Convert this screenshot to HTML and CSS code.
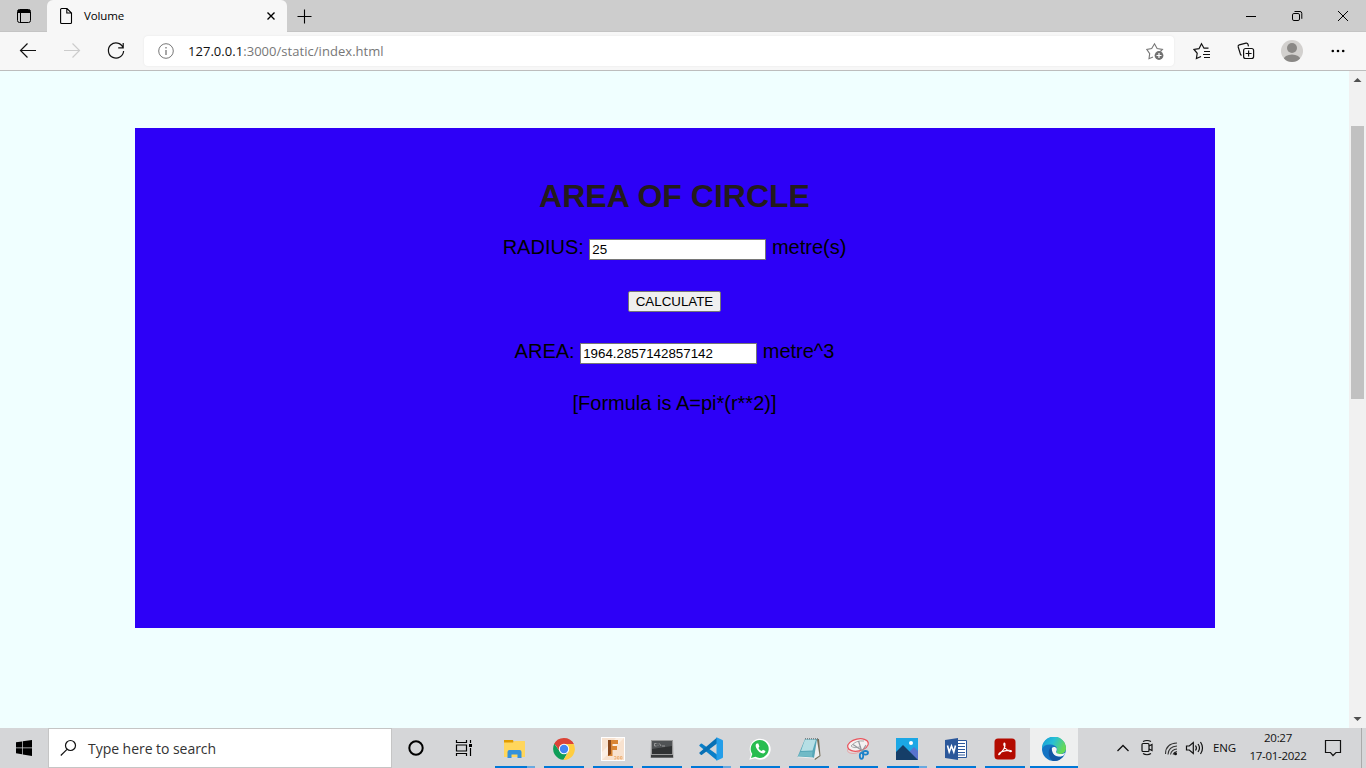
FILE: index.html
```html
<!DOCTYPE html>
<html lang="en">
<head>
<meta charset="utf-8">
<title>Volume</title>
<link rel="stylesheet" href="styles.css">
</head>
<body>
<header class="tabbar">
  <div class="tab-menu"><svg width="16" height="16" viewBox="0 0 16 16"><rect x="1.500" y="1.500" width="13" height="13" rx="2" fill="none" stroke="#000"/><path d="M2 2h12v3H2z"/><path d="M4.500 5v9" stroke="#000"/></svg></div>
  <div class="tab">
    <svg width="14" height="18" viewBox="0 0 14 18" fill="none" stroke="#000" stroke-width="1.1"><path d="M2.600 1.500H8l4.500 4.500v9.500a1 1 0 0 1-1 1H2.600a1 1 0 0 1-1-1v-13a1 1 0 0 1 1-1zM7.800 1.500V6h4.700"/></svg>
    <span class="tab-title">Volume</span>
    <svg class="tab-close" width="10" height="10" viewBox="0 0 10 10" stroke="#000" stroke-width="1.400"><path d="M1.500 1.500l7 7M8.500 1.500l-7 7"/></svg>
  </div>
  <div class="new-tab"><svg width="15" height="15" viewBox="0 0 15 15" stroke="#000" stroke-width="1.1"><path d="M7.500.5v14M.5 7.500h14"/></svg></div>
  <div class="window-controls">
    <svg width="46" height="32" viewBox="0 0 46 32" stroke="#000"><path d="M18 16.500h10"/></svg>
    <svg width="46" height="32" viewBox="0 0 46 32" fill="none" stroke="#000"><rect x="18.500" y="13.500" width="7" height="7" rx="1.400"/><path d="M20.500 11.500H26a1.800 1.800 0 0 1 1.800 1.800v5.500"/></svg>
    <svg width="46" height="32" viewBox="0 0 46 32" stroke="#000"><path d="M18 11l10 10M28 11L18 21"/></svg>
  </div>
</header>
<nav class="toolbar">
  <svg width="44" height="38" viewBox="0 0 44 38" fill="none" stroke="#111" stroke-width="1.200"><path d="M36 18.500H20.500M27.500 11.500l-7 7 7 7"/></svg>
  <svg width="44" height="38" viewBox="0 0 44 38" fill="none" stroke="#ccc" stroke-width="1.200"><path d="M20 18.500h15.500M28.500 11.500l7 7-7 7"/></svg>
  <svg width="44" height="38" viewBox="0 0 44 38" fill="none" stroke="#111" stroke-width="1.200"><path d="M35 15.500a7.600 7.600 0 1 0 .6 3.500M35.200 11v4.800h-5"/></svg>
  <div class="address">
    <svg width="16" height="16" viewBox="0 0 16 16"><circle cx="8" cy="8" r="7.300" fill="none" stroke="#777"/><path d="M8 7v5M8 4v1.400" stroke="#777" stroke-width="1.300"/></svg>
    <span class="url"><b>127.0.0.1</b>:3000/static/index.html</span>
    <svg class="add-favorite" width="18" height="18" viewBox="0 0 18 18"><path d="M7 15l-4 1.700 .7-5.100L.8 7.400l4.900-.8L8.500 1.800l2.600 4.800 5.300.8-2 2.100" fill="none" stroke="#777" stroke-width="1.100"/><circle cx="13" cy="13.500" r="4.400" fill="#717171"/><path d="M13 11v5M10.500 13.500h5" stroke="#fff" stroke-width="1.200"/></svg>
  </div>
  <div class="tools">
    <svg width="18" height="18" viewBox="0 0 18 18" fill="none" stroke="#111" stroke-width="1.200"><path d="M8 14.500l-4.600 2 .8-5.200L1 7.500l5-.8 2.500-5 2.500 4.500h4.500M11 9.500h6M10 12.500h7M11 15.500h6"/></svg>
    <svg width="18" height="18" viewBox="0 0 18 18" fill="none" stroke="#111" stroke-width="1.200"><rect x="6.600" y="6.500" width="10" height="10" rx="2"/><path d="M11.600 8.500v6M8.600 11.500h6M4.500 13.500l-1-1L1.200 5q-.4-1.700 1-2.100L9 1.200q1.500-.3 2 1.100l.5 2"/></svg>
    <svg class="avatar" width="22" height="22" viewBox="0 0 22 22"><defs><clipPath id="face"><circle cx="11" cy="11" r="11"/></clipPath></defs><g clip-path="url(#face)"><path d="M0 0h22v22H0z" fill="#d2d0ce"/><circle cx="11" cy="8" r="5" fill="#8a8886"/><ellipse cx="11" cy="20" rx="8.500" ry="5.500" fill="#8a8886"/></g></svg>
    <svg class="more" width="16" height="16" viewBox="0 0 16 16"><circle cx="2.800" cy="8" r="1.300"/><circle cx="8" cy="8" r="1.300"/><circle cx="13.200" cy="8" r="1.300"/></svg>
  </div>
</nav>
<div class="viewport">
  <main class="page">
    <section class="card">
      <h1>AREA OF CIRCLE</h1>
      <div class="row">RADIUS: <input type="text" value="25"> metre(s)</div>
      <div class="row"><button type="button">CALCULATE</button></div>
      <div class="row">AREA: <input type="text" value="1964.2857142857142"> metre^3</div>
      <div class="row">[Formula is A=pi*(r**2)]</div>
    </section>
  </main>
  <aside class="scrollbar">
    <svg width="17" height="17" viewBox="0 0 17 17"><path d="M4.500 11h8l-4-4z" fill="#505050"/></svg>
    <div class="thumb"></div>
    <svg class="scroll-down" width="17" height="17" viewBox="0 0 17 17"><path d="M4.500 6h8l-4 4z" fill="#505050"/></svg>
  </aside>
</div>
<footer class="taskbar">
  <div class="start"><svg width="16" height="16" viewBox="0 0 16 16"><path d="M0 2.300L6 1.400v6H0zM6.700 1.300L16 0v7.400H6.700zM0 8.200h6v6L0 13.300zM6.700 8.200H16V16l-9.300-1.500z"/></svg></div>
  <div class="search"><svg width="18" height="18" viewBox="0 0 18 18" fill="none" stroke="#111" stroke-width="1.200"><circle cx="10.500" cy="6.500" r="5"/><path d="M7 10.300L.8 16.500"/></svg><span>Type here to search</span></div>
  <div class="shell-button"><svg width="18" height="18" viewBox="0 0 18 18"><circle cx="9" cy="9" r="6.700" fill="none" stroke="#000" stroke-width="2"/></svg></div>
  <div class="shell-button"><svg width="18" height="16" viewBox="0 0 18 16" fill="none" stroke="#000" stroke-width="1.200"><path d="M1.500 0v2.500h10V0M1.500 16v-2.500h10V16M1.500 5h10v6h-10zM15.500 0v3M15.500 8v8"/><path d="M14 4h3v3h-3z" fill="#000" stroke="none"/></svg></div>
  <div class="apps">
    <div class="app multi"><svg width="24" height="24" viewBox="0 0 24 24"><path d="M1 3h9l1 3H1z" fill="#e19b00"/><path d="M1 5.500h9l1.500-1.500H21.500q.5 0 .5.500V19.500q0 .5-.5.500h-20q-.5 0-.5-.5z" fill="#ffd65c"/><path d="M4.500 21v-6q0-2 2-2h10q2 0 2 2v6h-4v-3.500h-6V21z" fill="#3491dc"/></svg></div>
    <div class="app"><svg width="24" height="24" viewBox="0 0 24 24"><path d="M12 12L2 7.300a11 11 0 0 1 19.700-.3z" fill="#db4437"/><path d="M2.300 6.800A11 11 0 0 0 11.500 22.800l5-8.800-9 0z" fill="#0f9d58"/><path d="M12 7h9.700A11 11 0 0 1 11.500 23l5-8.500z" fill="#ffcd40"/><path d="M2.500 6.500L7.500 14 12 7h9.700l-1.500-2.500L12 2 5 4z" fill="#db4437"/><circle cx="12" cy="12" r="5.200" fill="#fff"/><circle cx="12" cy="12" r="4.200" fill="#4285f4"/></svg></div>
    <div class="app"><svg width="24" height="24" viewBox="0 0 24 24"><path d="M0 0h24v24H0z" fill="#fff"/><path d="M1 1h22v22H1z" fill="#f8e2cf"/><path d="M1 23V15L15 1h8z" fill="#fcefe4"/><path d="M7 3h10v4h-5.500v2H16v4h-4.500v6H7z" fill="#d98534"/><path d="M7 3h3v14l-3 2z" fill="#8a481b"/><path d="M13 19.500h2v2.500h-2m3.500-2.500h1.500v2.500h-1.500zm3 0H21v2.500h-1.500z" fill="none" stroke="#eda765" stroke-width=".7"/></svg></div>
    <div class="app"><svg width="24" height="24" viewBox="0 0 24 24"><path d="M1 3h22l.5 18H.5z" fill="#999"/><path d="M2 4h20v13H2z" fill="#303233"/><path d="M2 4h20v5L2 12z" fill="#505355"/><path d="M1 18h22v2.500H1z" fill="#393b3c"/><path d="M6.500 6.500H4.500v2.500h2M8 6.500v.8m0 1v.8M9.500 6.500l1.500 2.500M12 9h3" stroke="#aaa" stroke-width=".8" fill="none"/></svg></div>
    <div class="app multi"><svg width="24" height="24" viewBox="0 0 24 24"><path d="M18 17.500v6L.5 9q-.5-.500 0-1l1.300-1.300q.6-.5 1.200 0z" fill="#0a7fc8"/><path d="M18 6.500v-6L.5 15.500q-.5.500 0 1l1.300 1.300q.6.500 1.200 0z" fill="#0870b4"/><path d="M17.500.2l6 2.800q.5.300.5 1v16q0 .7-.5 1l-6 2.800z" fill="#249ee9"/></svg></div>
    <div class="app"><svg width="24" height="24" viewBox="0 0 24 24"><path d="M1.300 22.800l1.700-5.500A10.500 10.500 0 1 1 7 21.300z" fill="#fff"/><path d="M3 21l1.300-4A9 9 0 1 1 7.400 19.800z" fill="#28bd50"/><path d="M8.800 6.500q-2 1.200-.5 4.500 2.500 5 7 5.500 2.200-.4 2.200-2.400l-2.500-1.300-1.300 1.300q-2.300-.7-3.300-3l1-1.500-1.100-3z" fill="#fff"/></svg></div>
    <div class="app"><svg width="24" height="24" viewBox="0 0 24 24"><path d="M8 2h14l1.500 17-5.500 4z" fill="#756f58"/><path d="M20 3l2.500 15.500-6 4L18.500 4z" fill="#eee"/><path d="M8 2h12l-3 19-16.500-1z" fill="#55a6b7"/><path d="M8 2.500h11l-3.500 11L4 14z" fill="#b6dfe5"/><path d="M3.500 15l12-.5-.5 5.500L1 19.300z" fill="#71bac6"/><path d="M8 1.700h13" stroke="#7b8588" stroke-dasharray="1 1" stroke-width="1.400"/><path d="M1 20l15.500 1" stroke="#eee"/></svg></div>
    <div class="app"><svg width="24" height="24" viewBox="0 0 24 24"><path d="M2 12q-2 4 5 4.500 4 0 7-2" fill="#e3dddd" stroke="#e7a5a8"/><ellipse cx="12" cy="8" rx="10.500" ry="6" transform="rotate(-12 12 8)" fill="#f4f1f1" stroke="#e9525b" stroke-width="1.200"/><path d="M5 9q5-6 13-5M5 9q3 3 10 .5" fill="none" stroke="#aaa"/><path d="M12.500 4l3.500 11M7 7.500l10.500 7M20 8l-4.500 7" stroke="#959ba1" stroke-width="1.200"/><g fill="none" stroke="#1c82c9" stroke-width="1.800"><ellipse cx="15.500" cy="18.800" rx="1.700" ry="3"/><ellipse cx="19.500" cy="15.800" rx="2.500" ry="1.800"/></g></svg></div>
    <div class="app multi"><svg width="22" height="22" viewBox="0 0 22 22"><path d="M0 0h22v22H0z" fill="#1ba7e5"/><path d="M12 15l6-6 4 4v9H10z" fill="#5873cf"/><path d="M0 14l7-7 15 15H0z" fill="#153e68"/><circle cx="15" cy="5" r="2" fill="#fff"/></svg></div>
    <div class="app"><svg width="24" height="24" viewBox="0 0 24 24"><path d="M12 3.500h10.500v17H12z" fill="#fff" stroke="#2b579a"/><path d="M14 6.500h7M14 9.500h7M14 12.500h7M14 15.500h7M14 18h7" stroke="#2b579a"/><path d="M1 3l13-2v22L1 21z" fill="#2b579a"/><path d="M3.500 8.500L5.200 15 7.500 9l2.300 6 1.700-6.500" fill="none" stroke="#fff" stroke-width="1.600"/></svg></div>
    <div class="app"><svg width="22" height="22" viewBox="0 0 22 22"><rect x=".5" y=".5" width="21" height="21" rx="3.500" fill="#b30b00"/><path d="M5 15.500c4-1.700 6.500-6.500 6-9.500-.3-2-1.700-.8-1 1.300 1.200 3.600 4.800 6.700 7 6.300 1.500-.5 0-1.600-3-1.200-4 .4-9 2.200-9.300 3.800-.2 1 .8.400 2.300-1.800" fill="none" stroke="#fff" stroke-width="1.100"/></svg></div>
    <div class="app active"><svg width="24" height="24" viewBox="0 0 24 24"><defs><linearGradient id="wave" x1="0" y1="0" x2="1" y2=".4"><stop stop-color="#1499d7"/><stop offset=".5" stop-color="#27bfd6"/><stop offset="1" stop-color="#65d958"/></linearGradient></defs><circle cx="12" cy="12" r="12" fill="#1474c4"/><path d="M0 12A12 12 0 0 1 24 11c.2 4-3 6-6 6-3.500 0-4.500-1.300-3.300-2.700C16 12 14.500 8 9 7.500 4 7 1 9 0 12z" fill="url(#wave)"/><path d="M9.500 13C9.500 10.800 10.500 10 12 10c2.500 0 3.500 2.200 2.300 4.300-1 1.700 1.500 3 4.700 2.800 2 0 3.300-.8 4.500-1.300-1.500 3.500-4 4.200-7 3.700-4-.5-7-2.500-7-6.500z" fill="#f3f5f6"/><path d="M9.500 9.500c-4 3-4 11 1.500 14.400 4.500.4 8-1.400 10.500-5.200-7 3.500-12-1-12-9.200z" fill="#1257a4"/></svg></div>
  </div>
  <div class="tray">
    <svg width="24" height="40" viewBox="0 0 24 40" fill="none" stroke="#111" stroke-width="1.300"><path d="M6.500 23l5.500-5.500 5.500 5.500"/></svg>
    <svg width="24" height="40" viewBox="0 0 24 40" fill="none" stroke="#111" stroke-width="1.200"><rect x="7" y="15.500" width="7" height="8" rx="1"/><path d="M14 18l3-1.500v6L14 21M8 13.500q4-2 8 0M8 25.500q4 2.500 8 0"/></svg>
    <svg width="24" height="40" viewBox="0 0 24 40" fill="none" stroke="#333" stroke-width="1.100"><path d="M6.500 26Q6.500 15.500 18 15M9 26.500Q9.500 18.500 18 18M11.500 26.500Q12.500 21.500 18 21M14 26.500Q15 24 18 23.500"/><circle cx="16.500" cy="25.700" r="1.500" fill="#111" stroke="none"/></svg>
    <svg width="24" height="40" viewBox="0 0 24 40" fill="none" stroke="#111" stroke-width="1.200"><path d="M3.500 18h2.800l4-3.500v11l-4-3.500H3.500zM12.500 17.500q1.800 2.500 0 5M15 16q3 4 0 8M17.500 14q4 6 0 12"/></svg>
    <span class="language">ENG</span>
    <div class="clock"><span>20:27</span><span>17-01-2022</span></div>
    <svg class="notice" width="18" height="18" viewBox="0 0 18 18" fill="none" stroke="#111" stroke-width="1.200"><path d="M1.500 1.500h15v12H12l-3 3-2.500-3h-5z"/></svg>
    <div class="show-desktop"></div>
  </div>
</footer>
</body>
</html>
```
FILE: styles.css
```css
* { box-sizing: border-box; }
body { margin: 0; width: 1366px; height: 768px; overflow: hidden; display: flex; flex-direction: column; font-family: "Open Sans", "Noto Sans", sans-serif; }
svg { display: block; flex: none; }
.tabbar { height: 32px; flex: none; display: flex; background: #cdcdcd; box-shadow: inset 0 -1px #c4c4c4; }
.tab-menu { width: 47px; display: flex; align-items: center; justify-content: center; }
.tab { width: 240px; display: flex; align-items: center; padding: 0 11px 0 12px; background: #f7f7f7; border-radius: 6px 6px 0 0; }
.tab-title { flex: 1; margin: -2px 0 0 11px; font-size: 11.5px; letter-spacing: -.15px; }
.new-tab { width: 35px; display: flex; align-items: center; justify-content: center; }
.window-controls { display: flex; margin-left: auto; }
.toolbar { height: 39px; flex: none; display: flex; align-items: center; background: #f7f7f7; border-bottom: 1px solid #bdbdbd; }
.address { width: 1030px; height: 30px; margin-left: 12px; padding: 0 11px 0 14px; display: flex; align-items: center; border-radius: 4px; background: #fff; box-shadow: 0 0 2px #e3e3e3; }
.url { flex: 1; margin-left: 14px; font-size: 13px; letter-spacing: .04px; color: #777; }
.url b { color: #111; font-weight: 400; }
.add-favorite { margin-right: -1px; }
.tools { display: flex; align-items: center; gap: 26px; margin-left: 19px; }
.avatar { margin-right: 1px; }
.viewport { height: 657px; flex: none; display: flex; }
.page { width: 1349px; padding-top: 57px; background: #f0ffff; }
.card { width: 1080px; height: 500px; margin-left: 135px; padding: 49px 1px 0 0; background: #2d00f7; color: #000; text-align: center; font: 20px "Liberation Sans", Arial, sans-serif; }
.card h1 { margin: 0 0 15px; font-size: 32px; line-height: 38px; color: #231b1b; }
.row { height: 52px; line-height: 34px; }
.row input { width: 177px; height: 21px; padding: 1px 2px; border: 1px solid #767676; background: #fff; color: #000; font: 13.333px "Liberation Sans", Arial, sans-serif; vertical-align: baseline; }
.row button { width: 93px; height: 21px; padding: 0; border: 1px solid #767676; border-radius: 2px; background: #efefef; color: #000; font: 13.333px "Liberation Sans", Arial, sans-serif; }
.scrollbar { width: 17px; display: flex; flex-direction: column; background: #f1f1f1; }
.thumb { width: 13px; height: 273px; margin: 38px 2px 0; background: #c1c1c1; }
.scroll-down { margin-top: auto; }
.taskbar { height: 40px; flex: none; display: flex; background: #d5d6d8; }
.start { width: 48px; display: flex; align-items: center; justify-content: center; }
.search { width: 344px; display: flex; align-items: center; padding: 0 11px; border: 1px solid #c5c5c5; background: #fff; }
.search span { margin-left: 10px; font-size: 14px; letter-spacing: -.04px; color: #333; }
.shell-button { width: 48px; display: flex; align-items: center; justify-content: center; }
.apps { display: flex; margin-left: 2px; }
.app { width: 49px; padding-top: 1px; display: flex; align-items: center; justify-content: center; background: linear-gradient(#0078d7, #0078d7) 5px 38px / 40px 2px no-repeat; }
.app.multi { background: linear-gradient(to right, #0078d7 32px, #68a9e0 32px) 5px 38px / 40px 2px no-repeat; }
.app.active { background: linear-gradient(#0078d7, #0078d7) 1px 38px / 48px 2px no-repeat, linear-gradient(#eeefef, #eeefef) 1px 0 / 48px 40px no-repeat; }
.tray { flex: 1; display: flex; align-items: center; padding-left: 33px; font-size: 11.5px; color: #111; }
.language { width: 24px; margin: -2px 0 0 6px; letter-spacing: -.1px; }
.clock { width: 70px; margin: -3px 0 0 6px; display: flex; flex-direction: column; align-items: center; line-height: 18px; letter-spacing: -.3px; }
.notice { margin-left: 11px; }
.show-desktop { width: 5px; height: 40px; margin-left: auto; border-left: 1px solid #aaa; }
```
